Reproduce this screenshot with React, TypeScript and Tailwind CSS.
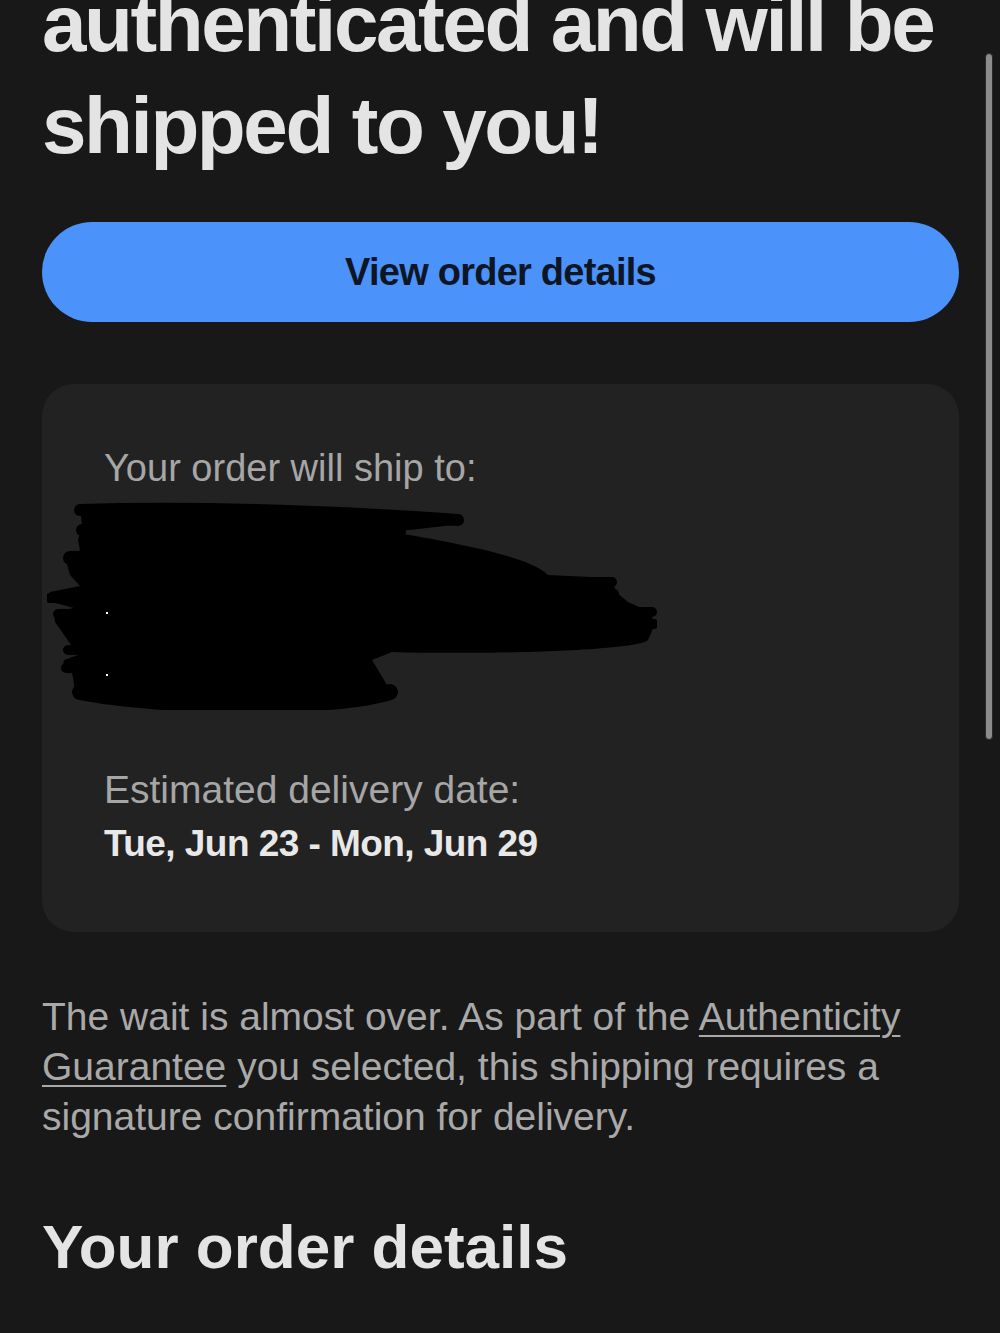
const Redaction = () => (
  <svg
    viewBox="47 500 610 210"
    width={610}
    height={210}
    className="block"
    aria-hidden="true"
  >
    <path
      fill="#000"
      d="M80 508 C150 500 300 505 455 515 L462 524 L392 532 C450 542 530 556 548 575 L612 578 L616 592 L628 602 L650 612 L655 624 L648 640 C640 650 500 655 392 652 L372 660 L390 690 C380 706 300 710 200 708 C110 706 74 700 75 690 L72 672 L62 670 L64 660 L78 655 L55 622 L54 612 L74 608 L48 601 L50 592 L80 586 L70 575 L66 560 L80 550 L78 540 L82 525 Z"
    />
    <g stroke="#000" strokeLinecap="round" fill="none">
      <path d="M80 510 C200 506 350 512 458 520" strokeWidth={12} />
      <path d="M82 530 C200 526 300 530 400 532" strokeWidth={12} />
      <path d="M70 558 L300 556" strokeWidth={14} />
      <path d="M50 598 L300 594" strokeWidth={10} />
      <path d="M58 614 L300 612" strokeWidth={10} />
      <path d="M68 650 L300 648" strokeWidth={10} />
      <path d="M66 668 L350 670" strokeWidth={10} />
      <path d="M520 582 L612 582" strokeWidth={10} />
      <path d="M540 596 L614 594" strokeWidth={10} />
      <path d="M560 612 L652 612" strokeWidth={10} />
      <path d="M560 624 L654 624" strokeWidth={10} />
      <path d="M80 692 C160 708 330 710 390 692" strokeWidth={16} />
    </g>
    <rect x={106} y={612} width={2} height={2} fill="#fff" />
    <rect x={106} y={674} width={2} height={2} fill="#fff" />
  </svg>
);

export default function App() {
  return (
    <div className="relative min-h-[1333px] w-[1000px] overflow-hidden bg-[#181818] pl-[42px] pr-[41px] font-['Liberation_Sans',Arial,sans-serif]">
      <h1 className="-mt-[27px] text-[80px] font-bold leading-[102px] tracking-[-0.03em] text-[#e4e4e4]">
        authenticated and will be
        <br />
        shipped to you!
      </h1>

      <button className="mt-[45px] flex h-[100px] w-full items-center justify-center rounded-full bg-[#4b92fb] text-[38px] font-bold tracking-[-0.02em] text-[#0e1624]">
        View order details
      </button>

      <div className="mt-[62px] rounded-[32px] bg-[#222222] pl-[62px] pr-[40px] pt-[59px] pb-[61px]">
        <p className="text-[38px] leading-[50px] text-[#a6a6a6]">Your order will ship to:</p>
        <div className="-ml-[57px] mt-[7px]">
          <Redaction />
        </div>
        <p className="mt-[53px] text-[39px] leading-[54px] text-[#a6a6a6]">Estimated delivery date:</p>
        <p className="text-[37px] font-bold leading-[54px] tracking-[-0.015em] text-[#e8e8e8]">
          Tue, Jun 23 - Mon, Jun 29
        </p>
      </div>

      <p className="mt-[60px] text-[39px] leading-[50px] text-[#a9a9a9]">
        The wait is almost over. As part of the{" "}
        <span className="underline decoration-2 underline-offset-[5px]">Authenticity Guarantee</span> you
        selected, this shipping requires a signature confirmation for delivery.
      </p>

      <h2 className="mt-[67px] text-[62px] font-bold leading-[76px] text-[#e4e4e4]">
        Your order details
      </h2>

      <div className="absolute left-[985px] top-[53px] h-[687px] w-[8px] rounded-full border border-[#2a2a2a] bg-[#8c8c8c]" />
    </div>
  );
}
